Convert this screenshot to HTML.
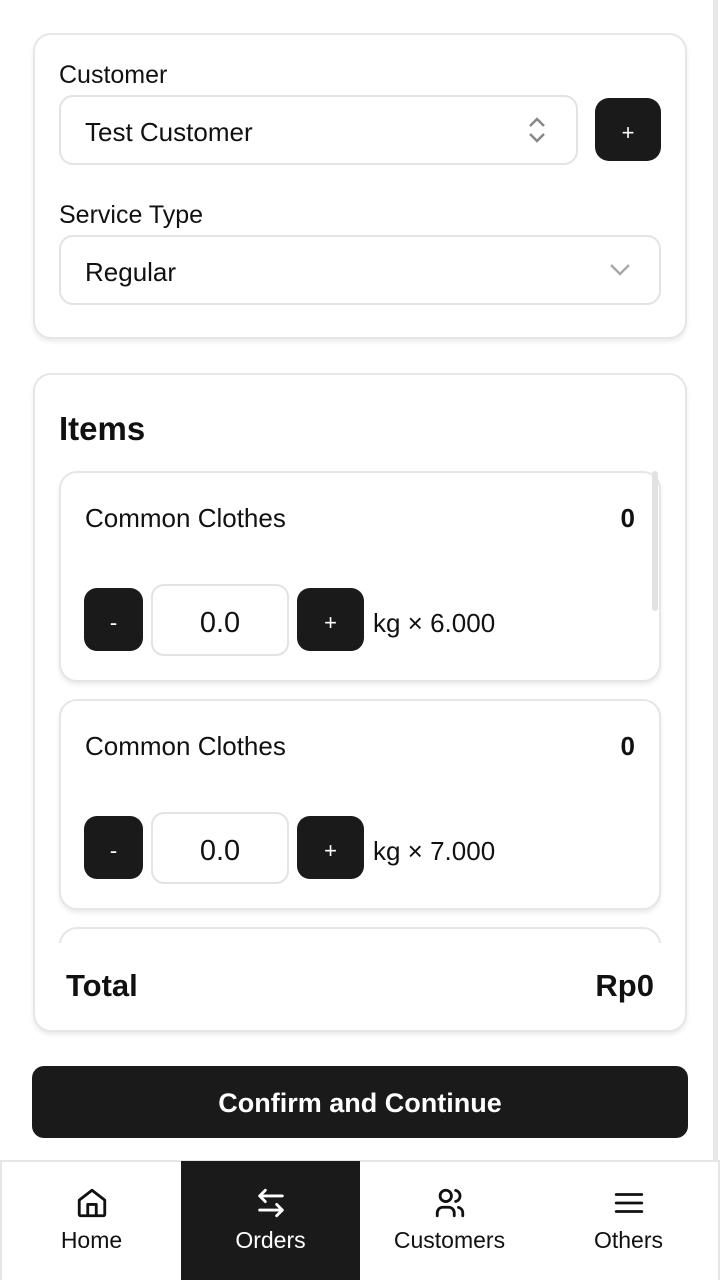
<!DOCTYPE html>
<html><head><meta charset="utf-8"><style>
*{box-sizing:border-box;margin:0;padding:0}
body{width:720px;height:1280px;background:#fff;font-family:"Liberation Sans",sans-serif;color:#111;position:relative;overflow:hidden}
.abs{position:absolute}
.card{position:absolute;background:#fff;border:2px solid #e6e6e6;border-radius:18px;box-shadow:0 3px 4px rgba(0,0,0,0.08)}
.sel{position:absolute;border:2px solid #e3e3e3;border-radius:14px;background:#fff;font-size:26px;padding-left:24px;padding-top:4px;display:flex;align-items:center}
.lbl{position:absolute;font-size:25px}
.btn{position:absolute;background:#1a1a1a;color:#fff;border-radius:13px;display:flex;align-items:center;justify-content:center;font-size:22px;padding-top:6px}
.item{position:absolute;left:59px;width:602px;height:211px;border:2px solid #e6e6e6;border-radius:18px;background:#fff;box-shadow:0 3px 4px rgba(0,0,0,0.08)}
.name{position:absolute;left:24px;top:30px;font-size:26px}
.amt{position:absolute;right:24px;top:30px;font-size:26px;font-weight:bold}
.inp{position:absolute;border:2px solid #e3e3e3;border-radius:13px;display:flex;align-items:center;justify-content:center;font-size:29px;padding-top:6px}
.unit{position:absolute;font-size:26px}
.nav{position:absolute;top:1161px;height:119px;width:179px;display:flex;flex-direction:column;align-items:center}
.nav span{font-size:23px;position:absolute;top:66px}
.nav svg{position:absolute;top:25px}
</style></head><body>
<div class="abs" style="right:2px;top:0;width:5px;height:1280px;background:#e8e8e8"></div>

<div class="card" style="left:33px;top:33px;width:654px;height:306px"></div>
<div class="lbl" style="left:59px;top:61px">Customer</div>
<div class="sel" style="left:59px;top:95px;width:519px;height:70px">Test Customer</div>
<svg class="abs" style="left:526px;top:116px" width="22" height="28" viewBox="0 0 22 28"><path d="M4 10 L11 3 L18 10 M4 18 L11 25 L18 18" stroke="#888" stroke-width="2.5" fill="none"/></svg>
<div class="btn" style="left:595px;top:98px;width:66px;height:63px;border-radius:14px">+</div>
<div class="lbl" style="left:59px;top:201px">Service Type</div>
<div class="sel" style="left:59px;top:235px;width:602px;height:70px">Regular</div>
<svg class="abs" style="left:609px;top:262px" width="22" height="16" viewBox="0 0 22 16"><path d="M2 3 L11 12 L20 3" stroke="#aaa" stroke-width="2.5" fill="none"/></svg>

<div class="card" style="left:33px;top:373px;width:654px;height:659px"></div>
<div class="abs" style="left:59px;top:410px;font-size:33px;font-weight:bold">Items</div>
<div class="abs" style="left:40px;top:462px;width:640px;height:481px;overflow:hidden">
 <div class="item" style="left:19px;top:9px">
  <div class="name">Common Clothes</div><div class="amt">0</div>
  <div class="btn" style="left:23px;top:115px;width:59px;height:63px">-</div>
  <div class="inp" style="left:90px;top:111px;width:138px;height:72px">0.0</div>
  <div class="btn" style="left:236px;top:115px;width:67px;height:63px">+</div>
  <div class="unit" style="left:312px;top:135px">kg × 6.000</div>
 </div>
 <div class="item" style="left:19px;top:237px">
  <div class="name">Common Clothes</div><div class="amt">0</div>
  <div class="btn" style="left:23px;top:115px;width:59px;height:63px">-</div>
  <div class="inp" style="left:90px;top:111px;width:138px;height:72px">0.0</div>
  <div class="btn" style="left:236px;top:115px;width:67px;height:63px">+</div>
  <div class="unit" style="left:312px;top:135px">kg × 7.000</div>
 </div>
 <div class="item" style="left:19px;top:465px"></div>
 <div class="abs" style="left:612px;top:9px;width:6px;height:140px;background:#e2e2e2;border-radius:3px"></div>
</div>
<div class="abs" style="left:66px;top:968px;font-size:31px;font-weight:bold">Total</div>
<div class="abs" style="right:66px;top:968px;font-size:31px;font-weight:bold">Rp0</div>

<div class="btn" style="left:32px;top:1066px;width:656px;height:72px;font-size:27px;font-weight:bold;border-radius:12px;padding-top:2px">Confirm and Continue</div>

<div class="abs" style="left:0;top:1160px;width:720px;height:120px;border:2px solid #e6e6e6;border-bottom:none;background:#fff"></div>
<div class="nav" style="left:2px"><svg width="34" height="34" viewBox="0 0 24 24" fill="none" stroke="#111" stroke-width="2" stroke-linejoin="round"><path d="M3 10 L12 3 L21 10 V20 a1 1 0 0 1-1 1 H4 a1 1 0 0 1-1-1Z M9 21 V13 H15 V21"/></svg><span>Home</span></div>
<div class="nav" style="left:181px;background:#1a1a1a;color:#fff"><svg width="34" height="34" viewBox="0 0 24 24" fill="none" stroke="#fff" stroke-width="2" stroke-linecap="round" stroke-linejoin="round"><path d="M8 3 L4 7 L8 11 M4 7 H20 M16 13 L20 17 L16 21 M20 17 H4"/></svg><span>Orders</span></div>
<div class="nav" style="left:360px"><svg width="34" height="34" viewBox="0 0 24 24" fill="none" stroke="#111" stroke-width="2" stroke-linecap="round"><circle cx="9" cy="7" r="4"/><path d="M3 21 v-2 a4 4 0 0 1 4-4 h4 a4 4 0 0 1 4 4 v2 M16 3.1 a4 4 0 0 1 0 7.8 M21 21 v-2 a4 4 0 0 0-3-3.9"/></svg><span>Customers</span></div>
<div class="nav" style="left:539px"><svg width="34" height="34" viewBox="0 0 24 24" fill="none" stroke="#111" stroke-width="2" stroke-linecap="round"><path d="M3 6 H21 M3 12 H21 M3 18 H21"/></svg><span>Others</span></div>
</body></html>
